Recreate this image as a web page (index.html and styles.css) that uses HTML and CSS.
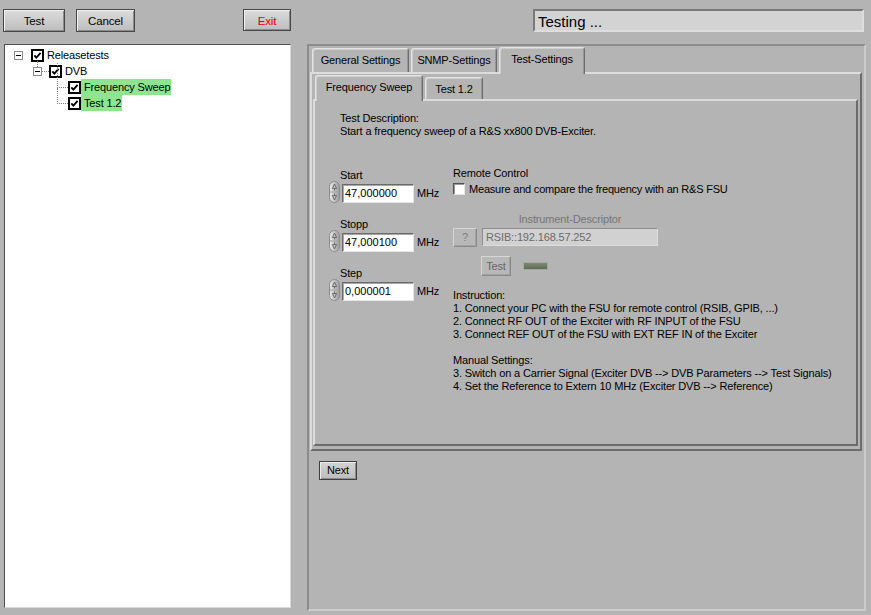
FILE: index.html
```html
<!DOCTYPE html>
<html>
<head>
<meta charset="utf-8">
<title>Releasetests</title>
<link rel="stylesheet" href="styles.css">
</head>
<body>
<div class="app">
  <div class="toolbar">
    <div class="btn btn-test">Test</div>
    <div class="btn btn-cancel">Cancel</div>
    <div class="btn btn-exit">Exit</div>
  </div>
  <div class="status-cell"><div class="status">Testing ...</div></div>

  <div class="tree">
    <div class="node">
      <span class="sp sp0"></span>
      <span class="exp"><svg width="9" height="9" viewBox="0 0 9 9"><rect x="0.5" y="0.5" width="8" height="8" fill="#fff" stroke="#8a8a8a"/><line x1="2" y1="4.5" x2="7" y2="4.5" stroke="#000"/></svg></span>
      <span class="sp gap8"></span>
      <svg class="cb" width="13" height="13" viewBox="0 0 13 13"><rect x="1" y="1" width="11" height="11" fill="#fff" stroke="#000" stroke-width="2"/><path d="M3.3 6.3 L5.4 8.6 L9.6 3.9" stroke="#000" stroke-width="1.9" fill="none"/></svg>
      <span class="label">Releasetests</span>
    </div>
    <div class="node">
      <span class="sp sp1"></span>
      <span class="exp linked"><svg width="9" height="9" viewBox="0 0 9 9"><rect x="0.5" y="0.5" width="8" height="8" fill="#fff" stroke="#8a8a8a"/><line x1="2" y1="4.5" x2="7" y2="4.5" stroke="#000"/></svg></span>
      <span class="hl hl7"></span>
      <svg class="cb" width="13" height="13" viewBox="0 0 13 13"><rect x="1" y="1" width="11" height="11" fill="#fff" stroke="#000" stroke-width="2"/><path d="M3.3 6.3 L5.4 8.6 L9.6 3.9" stroke="#000" stroke-width="1.9" fill="none"/></svg>
      <span class="label">DVB</span>
    </div>
    <div class="node">
      <span class="sp sp2"></span>
      <span class="hl hl11 hl-a"></span>
      <svg class="cb" width="13" height="13" viewBox="0 0 13 13"><rect x="1" y="1" width="11" height="11" fill="#fff" stroke="#000" stroke-width="2"/><path d="M3.3 6.3 L5.4 8.6 L9.6 3.9" stroke="#000" stroke-width="1.9" fill="none"/></svg>
      <span class="label sel">Frequency Sweep</span>
    </div>
    <div class="node">
      <span class="sp sp2"></span>
      <span class="hl hl11 hl-b"></span>
      <svg class="cb" width="13" height="13" viewBox="0 0 13 13"><rect x="1" y="1" width="11" height="11" fill="#fff" stroke="#000" stroke-width="2"/><path d="M3.3 6.3 L5.4 8.6 L9.6 3.9" stroke="#000" stroke-width="1.9" fill="none"/></svg>
      <span class="label sel">Test 1.2</span>
    </div>
  </div>

  <div class="frame">
    <div class="tabs tabs-outer">
      <div class="tab tw-general">General Settings</div>
      <div class="tab tw-snmp">SNMP-Settings</div>
      <div class="tab active tw-test">Test-Settings</div>
    </div>
    <div class="page page-outer">
      <div class="tabs tabs-inner">
        <div class="tab active tw-freq">Frequency Sweep</div>
        <div class="tab tw-t12">Test 1.2</div>
      </div>
      <div class="page page-inner">
        <div class="desc">
          <div>Test Description:</div>
          <div>Start a frequency sweep of a R&amp;S xx800 DVB-Exciter.</div>
        </div>
        <div class="controls">
          <div class="col-left">
            <div class="group">
              <div class="glabel">Start</div>
              <div class="num-row">
                <svg class="spin" width="11" height="22" viewBox="0 0 11 22"><defs><linearGradient id="sg" x1="0" x2="1" y1="0" y2="0"><stop offset="0" stop-color="#ececec"/><stop offset="1" stop-color="#9a9a9a"/></linearGradient></defs><rect x="0.5" y="0.5" width="10" height="21" rx="5" fill="url(#sg)" stroke="#8c8c8c"/><line x1="1" y1="11" x2="10" y2="11" stroke="#a2a2a2"/><path d="M5.5 3 L3.4 7.5 H7.6 Z M5.5 7.5 V9.5" fill="none" stroke="#6a6a6a"/><path d="M5.5 19 L3.4 14.5 H7.6 Z M5.5 14.5 V12.5" fill="none" stroke="#6a6a6a"/></svg>
                <div class="num">47,000000</div>
                <span class="unit">MHz</span>
              </div>
            </div>
            <div class="group">
              <div class="glabel">Stopp</div>
              <div class="num-row">
                <svg class="spin" width="11" height="22" viewBox="0 0 11 22"><defs><linearGradient id="sg2" x1="0" x2="1" y1="0" y2="0"><stop offset="0" stop-color="#ececec"/><stop offset="1" stop-color="#9a9a9a"/></linearGradient></defs><rect x="0.5" y="0.5" width="10" height="21" rx="5" fill="url(#sg2)" stroke="#8c8c8c"/><line x1="1" y1="11" x2="10" y2="11" stroke="#a2a2a2"/><path d="M5.5 3 L3.4 7.5 H7.6 Z M5.5 7.5 V9.5" fill="none" stroke="#6a6a6a"/><path d="M5.5 19 L3.4 14.5 H7.6 Z M5.5 14.5 V12.5" fill="none" stroke="#6a6a6a"/></svg>
                <div class="num">47,000100</div>
                <span class="unit">MHz</span>
              </div>
            </div>
            <div class="group">
              <div class="glabel">Step</div>
              <div class="num-row">
                <svg class="spin" width="11" height="22" viewBox="0 0 11 22"><defs><linearGradient id="sg3" x1="0" x2="1" y1="0" y2="0"><stop offset="0" stop-color="#ececec"/><stop offset="1" stop-color="#9a9a9a"/></linearGradient></defs><rect x="0.5" y="0.5" width="10" height="21" rx="5" fill="url(#sg3)" stroke="#8c8c8c"/><line x1="1" y1="11" x2="10" y2="11" stroke="#a2a2a2"/><path d="M5.5 3 L3.4 7.5 H7.6 Z M5.5 7.5 V9.5" fill="none" stroke="#6a6a6a"/><path d="M5.5 19 L3.4 14.5 H7.6 Z M5.5 14.5 V12.5" fill="none" stroke="#6a6a6a"/></svg>
                <div class="num">0,000001</div>
                <span class="unit">MHz</span>
              </div>
            </div>
          </div>
          <div class="col-right">
            <div class="rc-label">Remote Control</div>
            <div class="check-row">
              <span class="chk"></span>
              <span class="chk-text">Measure and compare the frequency with an R&amp;S FSU</span>
            </div>
            <div class="instr-label">Instrument-Descriptor</div>
            <div class="desc-row">
              <div class="dbtn qbtn">?</div>
              <div class="field">RSIB::192.168.57.252</div>
            </div>
            <div class="test-row">
              <div class="dbtn tbtn">Test</div>
              <div class="led"></div>
            </div>
            <div class="instructions">Instruction:
1. Connect your PC with the FSU for remote control (RSIB, GPIB, ...)
2. Connect RF OUT of the Exciter with RF INPUT of the FSU
3. Connect REF OUT of the FSU with EXT REF IN of the Exciter

Manual Settings:
3. Switch on a Carrier Signal (Exciter DVB --&gt; DVB Parameters --&gt; Test Signals)
4. Set the Reference to Extern 10 MHz (Exciter DVB --&gt; Reference)</div>
          </div>
        </div>
      </div>
    </div>
    <div class="footer">
      <div class="next">Next</div>
    </div>
  </div>
</div>
</body>
</html>
```

FILE: styles.css
```css
* { box-sizing: border-box; }
html, body { margin: 0; padding: 0; }
body {
  width: 871px;
  height: 615px;
  overflow: hidden;
  background: #b4b4b4;
  font-family: "Liberation Sans", Arial, sans-serif;
  font-size: 11px;
  line-height: 13px;
  letter-spacing: -0.15px;
  color: #000;
}
.app {
  display: grid;
  grid-template-columns: 287px 559px;
  grid-template-rows: 23px 568px;
  column-gap: 16px;
  row-gap: 12px;
  padding: 9px 0 0 4px;
}

/* toolbar */
.toolbar { display: flex; align-items: flex-start; }
.btn {
  height: 23px;
  display: flex;
  align-items: center;
  justify-content: center;
  padding-top: 2px;
  font-size: 11.5px;
  border: 1px solid #474747;
  background: linear-gradient(#dcdcdc, #bdbdbd);
  box-shadow: inset 1px 1px 0 #f0f0f0, inset -1px -1px 0 #8c8c8c;
}
.btn-test { width: 62px; margin-left: -1px; }
.btn-cancel { width: 59px; margin-left: 11px; }
.btn-exit { width: 48px; height: 22px; margin-left: auto; color: #e00000; }

.status-cell { display: flex; justify-content: flex-end; padding-right: 2px; }
.status {
  width: 331px;
  height: 23px;
  background: #d3d3d3;
  border: 2px solid;
  border-color: #7a7a7a #dedede #dedede #7a7a7a;
  font-size: 15px;
  line-height: 21px;
  letter-spacing: 0;
  padding-left: 3px;
  overflow: hidden;
}

/* tree */
.tree {
  height: 564px;
  background: #fff;
  border: 1px solid;
  border-color: #4f4f4f #d9d9d9 #d9d9d9 #4f4f4f;
  padding-top: 2px;
}
.node { display: flex; align-items: center; height: 16px; }
.sp { display: block; flex: none; }
.sp0 { width: 9px; }
.sp1 { width: 28px; }
.sp2 { width: 52px; }
.gap8 { width: 8px; }
.exp { position: relative; display: block; width: 9px; height: 9px; flex: none; }
.exp svg { display: block; }
.exp.linked::before {
  content: "";
  position: absolute;
  left: 4px;
  top: -6px;
  height: 6px;
  border-left: 1px dotted #7f7f7f;
}
.hl { position: relative; display: block; flex: none; height: 0; border-top: 1px dotted #7f7f7f; }
.hl7 { width: 7px; }
.hl11 { width: 11px; }
.hl11::before {
  content: "";
  position: absolute;
  left: 0;
  bottom: 0;
  border-left: 1px dotted #7f7f7f;
}
.hl-a::before { height: 25px; }
.hl-b::before { height: 16px; }
.cb { display: block; flex: none; }
.label { height: 16px; line-height: 16px; padding: 0 1px 0 3px; white-space: nowrap; }
.sel { background: #90e490; }

/* right frame */
.frame {
  height: 567px;
  border: 2px solid;
  border-color: #8c8c8c #cbcbcb #cbcbcb #8c8c8c;
  display: flex;
  flex-direction: column;
}
.tabs { display: flex; align-items: flex-end; gap: 2px; flex: none; }
.tabs-outer { height: 26px; margin-left: 3px; }
.tabs-inner { height: 25px; margin-left: 3px; }
.tab {
  height: 24px;
  text-align: center;
  padding-top: 5px;
  white-space: nowrap;
  background: #b4b4b4;
  border: 1px solid;
  border-bottom: 0;
  border-color: #e4e4e4 #6c6c6c #6c6c6c #e4e4e4;
  border-radius: 3px 3px 0 0;
  box-shadow: inset 1px 1px 0 #cdcdcd, inset -1px 0 0 #979797;
}
.tab.active {
  height: 27px;
  margin-bottom: -2px;
  position: relative;
  z-index: 1;
  padding-top: 5px;
}
.tabs-inner .tab { height: 22px; }
.tabs-inner .tab.active { height: 26px; padding-top: 5px; }
.tw-general { width: 97px; }
.tw-snmp { width: 86px; }
.tw-test { width: 86px; }
.tw-freq { width: 108px; }
.tw-t12 { width: 58px; }

.page {
  border: 2px solid;
  border-color: #dcdcdc #6c6c6c #6c6c6c #dcdcdc;
  background: #b4b4b4;
}
.page-outer {
  height: 379px;
  margin: 0 2px 0 1px;
  display: flex;
  flex-direction: column;
  flex: none;
}
.page-inner {
  flex: none;
  height: 347px;
  margin: 0 2px 0 1px;
}

.desc { padding: 11px 0 0 25px; }

.controls { display: flex; margin-top: 31px; padding-left: 14px; }
.col-left { width: 124px; flex: none; }
.group + .group { margin-top: 15px; }
.glabel { padding-left: 11px; height: 13px; }
.num-row { display: flex; align-items: center; height: 22px; margin-top: -1px; }
.spin { display: block; flex: none; }
.num {
  width: 72px;
  height: 19px;
  margin-left: 2px;
  margin-top: 2px;
  background: #fff;
  border: 1px solid;
  border-color: #6a6a6a #e6e6e6 #e6e6e6 #6a6a6a;
  box-shadow: inset 1px 1px 0 #a8a8a8;
  padding-left: 2px;
  line-height: 17px;
  letter-spacing: 0;
}
.unit { margin-left: 3px; margin-top: 3px; }

.col-right { flex: 1; margin-top: -2px; }
.rc-label { height: 13px; }
.check-row { display: flex; align-items: center; height: 14px; margin-top: 2px; }
.chk {
  display: block;
  width: 12px;
  height: 12px;
  background: #fff;
  border: 1px solid;
  border-color: #505050 #e6e6e6 #e6e6e6 #505050;
  box-shadow: inset 1px 1px 0 #9c9c9c;
}
.chk-text { margin-left: 4px; white-space: nowrap; letter-spacing: -0.2px; }
.instr-label {
  margin-top: 17px;
  margin-left: 29px;
  width: 176px;
  text-align: center;
  color: #767676;
  height: 13px;
}
.desc-row { display: flex; align-items: flex-start; margin-top: 2px; }
.dbtn {
  display: flex;
  align-items: center;
  justify-content: center;
  background: #b8b8b8;
  border: 1px solid;
  border-color: #d6d6d6 #8a8a8a #8a8a8a #d6d6d6;
  box-shadow: inset -1px -1px 0 #a2a2a2;
  color: #7c7c7c;
}
.qbtn { width: 24px; height: 19px; }
.field {
  width: 176px;
  height: 18px;
  margin-left: 5px;
  background: #d1d1d1;
  border: 1px solid;
  border-color: #8e8e8e #dcdcdc #dcdcdc #8e8e8e;
  color: #6b6b6b;
  padding-left: 3px;
  line-height: 16px;
}
.test-row { display: flex; align-items: center; margin-top: 9px; padding-left: 28px; }
.tbtn { width: 30px; height: 20px; color: #666; }
.led {
  width: 25px;
  height: 8px;
  margin-left: 12px;
  background: linear-gradient(#7e8b74, #5d6b54);
  border: 1px solid #a3aa9c;
}
.instructions { margin-top: 13px; white-space: pre-line; }

.footer { padding: 10px 0 0 10px; }
.next {
  width: 38px;
  height: 19px;
  display: flex;
  align-items: center;
  justify-content: center;
  border: 1px solid #3f3f3f;
  background: linear-gradient(#d4d4d4, #bcbcbc);
  box-shadow: inset 1px 1px 0 #ececec, inset -1px -1px 0 #8c8c8c;
}
```
